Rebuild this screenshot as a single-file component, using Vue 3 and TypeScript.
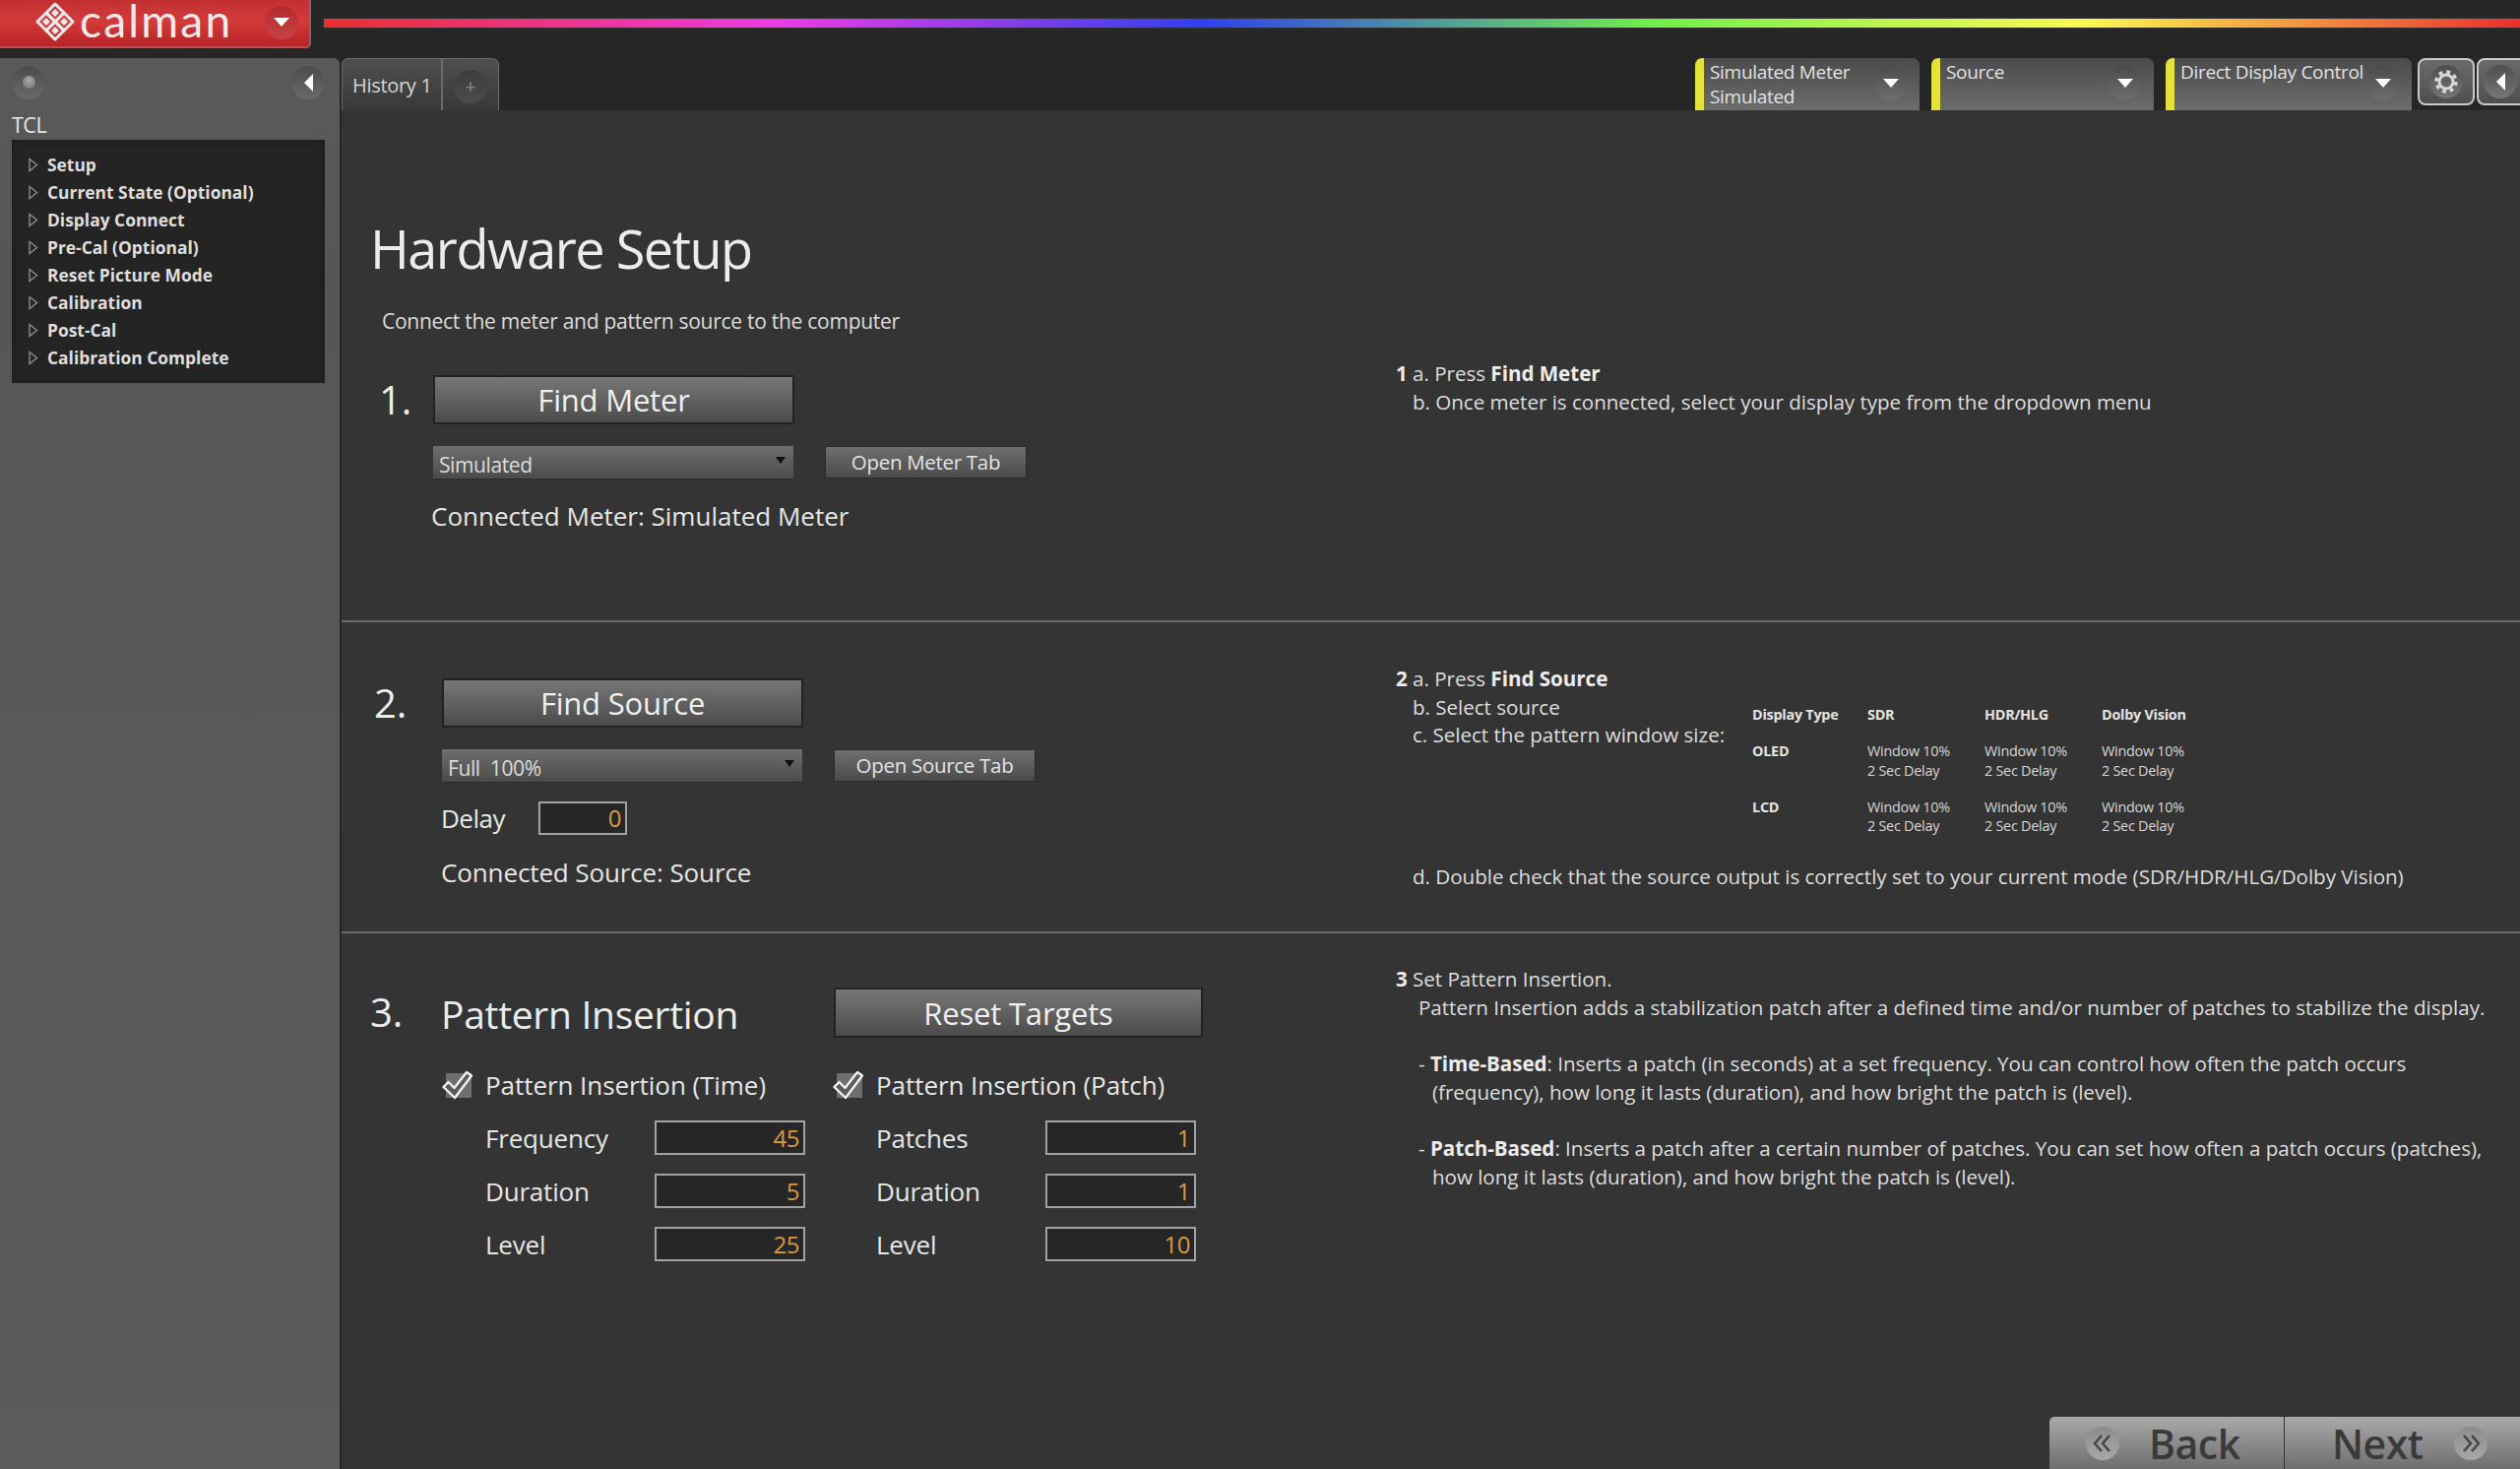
<script setup lang="ts">
const tree: string[] = ['Setup', 'Current State (Optional)', 'Display Connect', 'Pre-Cal (Optional)', 'Reset Picture Mode', 'Calibration', 'Post-Cal', 'Calibration Complete']
const chips: { lines: string[]; w: number }[] = [
  { lines: ['Simulated Meter', 'Simulated'], w: 228 },
  { lines: ['Source'], w: 226 },
  { lines: ['Direct Display Control'], w: 250 },
]
const timeFields = [['Frequency', '45'], ['Duration', '5'], ['Level', '25']]
const patchFields = [['Patches', '1'], ['Duration', '1'], ['Level', '10']]
const tableRows = [['OLED'], ['LCD']]
</script>

<template>
  <div class="app">
    <header class="top">
      <div class="logo">
        <svg class="mark" width="42" height="42" viewBox="0 0 42 42">
          <g fill="none" stroke="#f6e9e9" stroke-width="3" stroke-linejoin="round">
            <path d="M21 3 L30 12 L21 21 L12 12 Z" />
            <path d="M30 12 L39 21 L30 30 L21 21 Z" />
            <path d="M12 12 L21 21 L12 30 L3 21 Z" />
            <path d="M21 21 L30 30 L21 39 L12 30 Z" />
          </g>
          <g fill="#f6e9e9">
            <path d="M21 8 L25 12 L21 16 L17 12 Z" />
            <path d="M30 17 L34 21 L30 25 L26 21 Z" />
            <path d="M12 17 L16 21 L12 25 L8 21 Z" />
            <path d="M21 26 L25 30 L21 34 L17 30 Z" />
          </g>
        </svg>
        <span class="brand">calman</span>
        <span class="logo-drop"><i class="tri-down"></i></span>
      </div>
      <div class="rainbow"></div>
    </header>

    <div class="body">
      <aside class="side">
        <div class="side-head">
          <span class="round led"><i></i></span>
          <span class="round"><i class="tri-left"></i></span>
        </div>
        <div class="tcl">TCL</div>
        <ul class="tree">
          <li v-for="t in tree" :key="t">
            <svg class="tree-arrow" width="10" height="15" viewBox="0 0 10 15">
              <path d="M1 1.5 L8.5 7.5 L1 13.5 Z" fill="none" stroke="#8c8c8c" stroke-width="1.4" />
            </svg>
            <span>{{ t }}</span>
          </li>
        </ul>
      </aside>

      <div class="work">
        <div class="tabbar">
          <div class="tabs">
            <div class="tab">History 1</div>
            <div class="tab-add"><span>+</span></div>
          </div>
          <div class="tools">
            <div v-for="c in chips" :key="c.lines[0]" class="chip" :style="{ width: c.w + 'px' }">
              <div class="chip-text"><div v-for="l in c.lines" :key="l">{{ l }}</div></div>
              <span class="chip-drop"><i class="tri-down small"></i></span>
            </div>
            <div class="tool gear">
              <span class="tool-round">
                <svg width="30" height="30" viewBox="0 0 30 30" fill="none" stroke="#d9d9d9">
                  <circle cx="15" cy="15" r="7" stroke-width="3" />
                  <circle cx="15" cy="15" r="10" stroke-width="3.4" stroke-dasharray="3.9 3.95" />
                </svg>
              </span>
            </div>
            <div class="tool last">
              <span class="tool-round"><i class="tri-left"></i></span>
            </div>
          </div>
        </div>

        <main class="main">
          <div class="intro">
            <h1>Hardware Setup</h1>
            <p>Connect the meter and pattern source to the computer</p>
          </div>

          <section class="sec s1">
            <div class="left">
              <div class="num">1.</div>
              <div class="col">
                <button class="big">Find Meter</button>
                <div class="pick-row">
                  <div class="pick"><span>Simulated</span><i class="tri-black"></i></div>
                  <button class="small-btn">Open Meter Tab</button>
                </div>
                <div class="conn">Connected Meter: Simulated Meter</div>
              </div>
            </div>
            <div class="right">
              <div><b>1</b> a. Press <b>Find Meter</b></div>
              <div class="ind">b. Once meter is connected, select your display type from the dropdown menu</div>
            </div>
          </section>

          <section class="sec s2">
            <div class="left">
              <div class="num">2.</div>
              <div class="col">
                <button class="big">Find Source</button>
                <div class="pick-row">
                  <div class="pick"><span>Full&nbsp; 100%</span><i class="tri-black"></i></div>
                  <button class="small-btn">Open Source Tab</button>
                </div>
                <div class="delay">
                  <span class="delay-label">Delay</span>
                  <div class="val delay-val">0</div>
                </div>
                <div class="conn tight">Connected Source: Source</div>
              </div>
            </div>
            <div class="right">
              <div class="steps">
                <div class="steps-list">
                  <div><b>2</b> a. Press <b>Find Source</b></div>
                  <div class="ind">b. Select source</div>
                  <div class="ind">c. Select the pattern window size:</div>
                </div>
                <div class="table">
                  <b>Display Type</b><b>SDR</b><b>HDR/HLG</b><b>Dolby Vision</b>
                  <template v-for="r in tableRows" :key="r[0]">
                    <b>{{ r[0] }}</b>
                    <span v-for="n in 3" :key="n">Window 10%<br />2 Sec Delay</span>
                  </template>
                </div>
              </div>
              <div class="ind dbl">d. Double check that the source output is correctly set to your current mode (SDR/HDR/HLG/Dolby Vision)</div>
            </div>
          </section>

          <section class="sec s3">
            <div class="left">
              <div class="num">3.</div>
              <div class="col">
                <div class="pi-head">
                  <h2>Pattern Insertion</h2>
                  <button class="big reset">Reset Targets</button>
                </div>
                <div class="pi-cols">
                  <div v-for="(g, gi) in [timeFields, patchFields]" :key="gi" class="pi-col">
                    <div class="check">
                      <svg width="32" height="30" viewBox="0 0 32 30">
                        <rect x="4" y="3" width="26" height="25" fill="#6e6e6e" />
                        <path d="M1.5 17 L6.5 12 L12.5 18 L25 2 L30 5.5 L13 28 Z" fill="#5a5a5a" stroke="#f0f0f0" stroke-width="2.4" stroke-linejoin="round" />
                      </svg>
                      <span>{{ gi === 0 ? 'Pattern Insertion (Time)' : 'Pattern Insertion (Patch)' }}</span>
                    </div>
                    <div v-for="f in g" :key="f[0]" class="field">
                      <span class="field-label">{{ f[0] }}</span>
                      <div class="val">{{ f[1] }}</div>
                    </div>
                  </div>
                </div>
              </div>
            </div>
            <div class="right">
              <div><b>3</b> Set Pattern Insertion.</div>
              <div class="ind2">Pattern Insertion adds a stabilization patch after a defined time and/or number of patches to stabilize the display.</div>
              <div class="ind2 gap">- <b>Time-Based</b>: Inserts a patch (in seconds) at a set frequency. You can control how often the patch occurs</div>
              <div class="ind3">(frequency), how long it lasts (duration), and how bright the patch is (level).</div>
              <div class="ind2 gap">- <b>Patch-Based</b>: Inserts a patch after a certain number of patches. You can set how often a patch occurs (patches),</div>
              <div class="ind3">how long it lasts (duration), and how bright the patch is (level).</div>
            </div>
          </section>

          <nav class="nav">
            <div class="nav-btn back">
              <span class="nav-round">
                <svg width="20" height="20" viewBox="0 0 20 20" fill="none" stroke="#444" stroke-width="2.4">
                  <polyline points="9,2 2,10 9,18" /><polyline points="17,2 10,10 17,18" />
                </svg>
              </span>
              <span class="nav-text">Back</span>
            </div>
            <div class="nav-btn next">
              <span class="nav-text">Next</span>
              <span class="nav-round">
                <svg width="20" height="20" viewBox="0 0 20 20" fill="none" stroke="#444" stroke-width="2.4">
                  <polyline points="3,2 10,10 3,18" /><polyline points="11,2 18,10 11,18" />
                </svg>
              </span>
            </div>
          </nav>
        </main>
      </div>
    </div>
  </div>
</template>

<style>
html, body { margin: 0; background: #262626; }
</style>

<style scoped>
.app {
  width: 2560px;
  height: 1492px;
  overflow: hidden;
  background: #262626;
  color: #e8e8e8;
  font-family: "Open Sans", "Noto Sans", sans-serif;
  display: flex;
  flex-direction: column;
}
button { font-family: inherit; padding: 0; }
h1, h2, p, ul { margin: 0; padding: 0; font-weight: 400; }
i { display: block; font-style: normal; }

.top { height: 59px; display: flex; align-items: flex-start; flex: none; }
.logo {
  width: 316px;
  height: 49px;
  box-sizing: border-box;
  background: linear-gradient(#c23034, #d33a3a 45%, #b62427);
  border-radius: 0 0 5px 0;
  border-bottom: 2px solid #a25b5c;
  border-right: 2px solid #a25b5c;
  display: flex;
  align-items: center;
  padding-left: 35px;
}
.mark { flex: none; margin-top: -3px; }
.brand {
  font-family: "Lato", sans-serif;
  font-size: 46px;
  line-height: 40px;
  color: #f6e9e9;
  margin-left: 4px;
  margin-top: -6px;
  letter-spacing: 2.2px;
  width: 152px;
}
.logo-drop {
  width: 34px; height: 34px; border-radius: 50%;
  margin-left: 36px; margin-top: -2px;
  background: linear-gradient(#b32a2d, #c74347);
  display: flex; align-items: center; justify-content: center;
}
.tri-down { width: 0; height: 0; border-left: 8px solid transparent; border-right: 8px solid transparent; border-top: 9px solid #fff; }
.tri-down.small { border-left-width: 8px; border-right-width: 8px; border-top-width: 9px; }
.tri-left { width: 0; height: 0; border-top: 9px solid transparent; border-bottom: 9px solid transparent; border-right: 9px solid #fff; }
.tri-black { width: 0; height: 0; border-left: 5px solid transparent; border-right: 5px solid transparent; border-top: 7px solid #111; }
.rainbow {
  margin: 19px 0 0 13px;
  height: 9px;
  flex: 1;
  background: linear-gradient(90deg, #ea2e2e 0%, #ee3ae6 20.7%, #2f3ff0 40%, #6ff04a 60.4%, #fbfa50 80%, #ea2e2e 100%);
  box-shadow: 0 0 3px rgba(255,255,255,0.12);
}

.body { flex: 1; display: flex; min-height: 0; }
.side {
  width: 345px;
  flex: none;
  background: linear-gradient(#5a5a5a, #565656 15%, #5c5c5c);
  border-radius: 0 6px 0 0;
  padding: 0 15px 0 12px;
  box-sizing: border-box;
}
.side-head { height: 49px; display: flex; justify-content: space-between; align-items: center; }
.round {
  width: 34px; height: 34px; border-radius: 50%;
  background: linear-gradient(#4c4c4c, #6a6a6a);
  display: flex; align-items: center; justify-content: center;
}
.led i { width: 13px; height: 13px; border-radius: 50%; background: radial-gradient(circle at 50% 35%, #a9a9a9, #6e6e6e); }
.tcl { font-size: 21.5px; line-height: 28px; margin-top: 5px; color: #e8e8e8; letter-spacing: -0.5px; }
.tree {
  list-style: none;
  background: #242424;
  box-shadow: inset 0 0 6px #1a1a1a;
  height: 247px;
  margin-top: 1px;
  padding-top: 11px;
  box-sizing: border-box;
}
.tree li {
  height: 28px;
  line-height: 28px;
  font-size: 17.4px;
  font-weight: 700;
  color: #dedede;
  display: flex;
  align-items: center;
  white-space: nowrap;
}
.tree-arrow { margin: 0 9px 0 17px; flex: none; }

.work { flex: 1; min-width: 0; display: flex; flex-direction: column; margin-left: 2px; }
.tabbar { height: 53px; flex: none; display: flex; justify-content: space-between; align-items: flex-start; }
.tabs {
  display: flex; height: 53px; width: 160px;
  border: 1px solid #6a6a6a; border-bottom: 0; border-radius: 7px 7px 0 0;
  box-sizing: border-box;
  background: linear-gradient(#4f4f4f, #383838);
}
.tab {
  width: 102px; box-sizing: border-box; border-right: 2px solid #6a6a6a;
  font-size: 20px; line-height: 54px; padding-left: 10px; color: #d5d5d5; letter-spacing: -0.3px;
  white-space: nowrap;
}
.tab-add { flex: 1; display: flex; align-items: center; justify-content: center; }
.tab-add span {
  width: 34px; height: 34px; border-radius: 50%; margin-top: 4px;
  background: linear-gradient(#3c3c3c, #4c4c4c);
  color: #888; font-size: 20px; line-height: 34px; text-align: center;
}
.tools { display: flex; align-items: flex-start; margin-right: -14px; }
.chip {
  height: 53px; box-sizing: border-box; margin-right: 12px;
  border-left: 9px solid #e6e23c;
  border-radius: 7px 7px 0 0;
  background: linear-gradient(#4b4b4b, #6c6c6c);
  display: flex; justify-content: space-between;
  padding: 2px 13px 0 6px;
  font-size: 19px; line-height: 25px; color: #e2e2e2; letter-spacing: -0.3px;
}
.chip:nth-child(3) { margin-right: 6px; }
.chip-text { white-space: nowrap; }
.chip-drop {
  width: 33px; height: 36px; border-radius: 50%; margin-top: 5px; flex: none;
  background: linear-gradient(#4a4a4a, #6e6e6e);
  display: flex; align-items: center; justify-content: center;
}
.tool {
  height: 48px; box-sizing: border-box;
  border: 2px solid #c9c9c9; border-radius: 8px;
  background: linear-gradient(#6a6a6a, #4f4f4f);
  display: flex; align-items: center; justify-content: center;
}
.gear { width: 58px; margin-right: 2px; }
.last { width: 58px; justify-content: flex-start; padding-left: 5px; }
.tool-round {
  width: 34px; height: 34px; border-radius: 50%;
  background: linear-gradient(#4e4e4e, #767676);
  display: flex; align-items: center; justify-content: center;
}

.main { flex: 1; min-height: 0; background: #343434; display: flex; flex-direction: column; }
.intro { height: 249px; flex: none; box-sizing: border-box; padding: 100px 0 0 29px; }
h1 { font-size: 54px; line-height: 80px; color: #ececec; letter-spacing: -1.5px; white-space: nowrap; }
.intro p { font-size: 21px; line-height: 30px; margin: 19px 0 0 12px; color: #dcdcdc; letter-spacing: -0.27px; }

.sec { display: flex; flex: none; box-sizing: border-box; border-bottom: 2px solid #6c6c6c; }
.left { width: 1071px; flex: none; display: flex; box-sizing: border-box; }
.num { font-size: 40px; line-height: 50px; color: #ececec; }
.right { flex: 1; font-size: 20.6px; line-height: 28.7px; color: #dedede; letter-spacing: -0.03px; white-space: nowrap; }
.right b { font-weight: 700; color: #ececec; }
.ind { padding-left: 17px; }
.ind2 { padding-left: 23px; }
.ind3 { padding-left: 37px; }
.gap { margin-top: 28.7px; }

.s1 { height: 271px; padding-top: 20px; }
.s1 .left { padding-left: 38px; }
.s1 .num { width: 55px; }
.s1 .right { margin-top: -16px; }

.s2 { height: 316px; padding-top: 57px; }
.s2 .left { padding-left: 33px; }
.s2 .num { width: 69px; }
.s2 .right { margin-top: -14px; }

.s3 { border-bottom: 0; padding-top: 55px; height: 438px; margin-bottom: auto; }
.s3 .left { padding-left: 29px; }
.s3 .num { width: 73px; }
.s3 .right { margin-top: -23px; }

.col { display: flex; flex-direction: column; }
.big {
  width: 367px; height: 50px;
  border: 2px solid #222;
  background: linear-gradient(#777, #4b4b4b);
  color: #f0f0f0; font-size: 31px; letter-spacing: -0.2px;
  box-sizing: border-box;
}
.pick-row { display: flex; margin-top: 22px; gap: 32px; }
.pick {
  width: 366px; height: 33px; box-sizing: border-box;
  background: linear-gradient(#6e6e6e, #4b4b4b);
  padding: 0 8px 0 6px;
  display: flex; justify-content: space-between; align-items: center;
  font-size: 21px; color: #dcdcdc; letter-spacing: -0.4px;
  box-shadow: 0 1px 0 #2a2a2a;
}
.pick span { margin-top: 4px; }
.pick .tri-black { margin-top: -5px; }
.small-btn {
  width: 205px; height: 33px; box-sizing: border-box;
  border: 1px solid #2a2a2a;
  background: linear-gradient(#6e6e6e, #4b4b4b);
  color: #e4e4e4; font-size: 20.5px; letter-spacing: -0.3px;
  line-height: 26px;
  padding-bottom: 2px;
}
.conn { font-size: 26px; line-height: 37px; margin-top: 20px; margin-left: -2px; color: #e6e6e6; letter-spacing: 0; white-space: nowrap; }
.conn.tight { margin-left: -1px; letter-spacing: -0.12px; }
.delay { display: flex; align-items: center; margin-top: 20px; height: 34px; margin-left: -1px; }
.delay-label { width: 99px; font-size: 26px; letter-spacing: -0.5px; }
.val {
  width: 153px; height: 35px; box-sizing: border-box;
  border: 2px solid #a2a2a2;
  background: #262626;
  color: #d99a3d;
  text-align: right;
  padding-right: 4px;
  font-size: 24px; line-height: 31px; letter-spacing: -0.5px;
}
.delay-val { width: 90px; height: 34px; line-height: 30px; }

.steps { display: flex; }
.steps-list { width: 362px; flex: none; }
.table {
  margin-top: 41px;
  display: grid;
  grid-template-columns: 117px 119px 119px auto;
  row-gap: 17.5px;
  font-size: 14.4px;
  line-height: 19.5px;
  letter-spacing: -0.25px;
  color: #d6d6d6;
}
.table b { letter-spacing: -0.25px; color: #e4e4e4; }
.dbl { margin-top: 27px; }

.pi-head { display: flex; align-items: center; height: 51px; }
h2 { width: 399px; font-size: 39px; line-height: 51px; color: #ececec; letter-spacing: -0.3px; white-space: nowrap; margin-left: -1px; padding-top: 2px; }
.big.reset { width: 375px; height: 51px; }
.pi-cols { display: flex; margin-top: 33px; }
.pi-col { width: 398px; flex: none; }
.check { display: flex; align-items: center; height: 30px; font-size: 26px; letter-spacing: -0.06px; color: #e6e6e6; margin-bottom: 21px; white-space: nowrap; }
.check svg { margin-right: 12px; flex: none; }
.field { display: flex; align-items: center; height: 35px; margin-bottom: 19px; padding-left: 44px; }
.field-label { width: 172px; font-size: 26px; letter-spacing: -0.2px; color: #e6e6e6; }
.pi-col:last-child { margin-left: -1px; }

.nav { align-self: flex-end; display: flex; height: 53px; width: 478px; flex: none; }
.nav-btn {
  flex: none; height: 53px; box-sizing: border-box;
  background: linear-gradient(#a9a9a9, #6e6e6e);
  display: flex; align-items: center;
  color: #3a3a3a; font-weight: 600;
}
.nav-btn.back { width: 239px; border-radius: 5px 0 0 0; border-right: 1px solid #333; padding-left: 37px; }
.nav-btn.next { width: 239px; padding-left: 48px; }
.nav-round {
  width: 34px; height: 34px; border-radius: 50%; flex: none;
  background: linear-gradient(#8c8c8c, #a8a8a8);
  display: flex; align-items: center; justify-content: center;
}
.nav-text { font-size: 41px; line-height: 44px; letter-spacing: -0.5px; }
.back .nav-text { margin-left: 30px; }
.next .nav-text { width: 90px; margin-right: 50px; }
.next .nav-round { margin-left: -16px; }
</style>
